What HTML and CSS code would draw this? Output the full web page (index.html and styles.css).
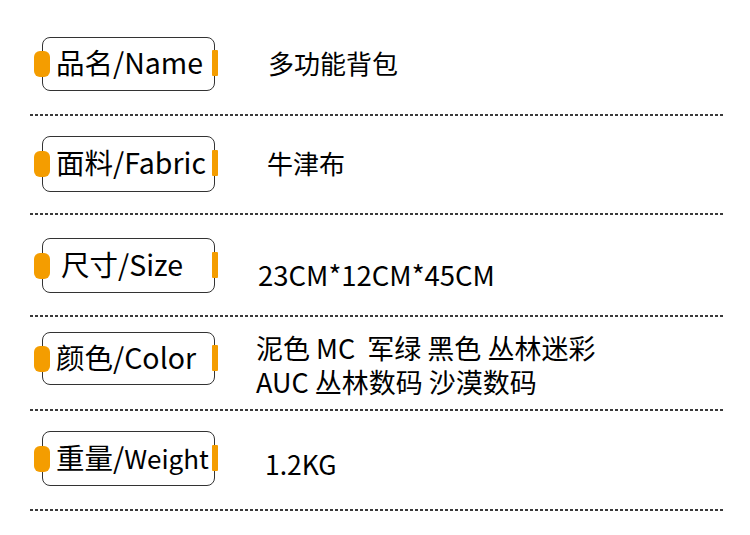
FILE: index.html
```html
<!DOCTYPE html>
<html lang="zh">
<head>
<meta charset="utf-8">
<link rel="stylesheet" href="styles.css">
</head>
<body>
<main class="sheet">
  <section class="row r1">
    <div class="tag"><span class="pill"></span><span class="tag-text">品名/Name</span><span class="bar"></span></div>
    <div class="value v1">多功能背包</div>
  </section>
  <div class="rule"></div>
  <section class="row r2">
    <div class="tag"><span class="pill"></span><span class="tag-text">面料/Fabric</span><span class="bar"></span></div>
    <div class="value v2">牛津布</div>
  </section>
  <div class="rule"></div>
  <section class="row r3">
    <div class="tag"><span class="pill"></span><span class="tag-text t3">尺寸/Size</span><span class="bar"></span></div>
    <div class="value v3">23CM*12CM*45CM</div>
  </section>
  <div class="rule"></div>
  <section class="row r4">
    <div class="tag"><span class="pill"></span><span class="tag-text">颜色/Color</span><span class="bar"></span></div>
    <div class="value v4"><div class="line">泥色 MC&nbsp; 军绿 黑色 丛林迷彩</div><div class="line">AUC 丛林数码 沙漠数码</div></div>
  </section>
  <div class="rule"></div>
  <section class="row r5">
    <div class="tag"><span class="pill"></span><span class="tag-text">重量/<span class="small">Weight</span></span><span class="bar"></span></div>
    <div class="value v5">1.2KG</div>
  </section>
  <div class="rule"></div>
</main>
</body>
</html>
```
FILE: styles.css
```css
html, body {
  margin: 0;
  padding: 0;
  background: #ffffff;
}
body {
  width: 750px;
  height: 535px;
  overflow: hidden;
  font-family: "Noto Sans CJK SC", "Noto Sans", sans-serif;
  color: #000;
}
.sheet {
  padding-left: 30px;
  width: 693px;
}
.row {
  display: flex;
  align-items: center;
  padding-left: 12px;
}
.r1 { padding-top: 37px; padding-bottom: 23px; }
.r2 { padding-top: 20px; padding-bottom: 21px; }
.r3 { padding-top: 23px; padding-bottom: 22px; }
.r4 { padding-top: 15px; padding-bottom: 24px; }
.r5 { padding-top: 20px; padding-bottom: 23px; }

.tag {
  position: relative;
  box-sizing: border-box;
  width: 173px;
  height: 55px;
  border: 1.5px solid #333;
  border-radius: 8px;
  display: flex;
  align-items: center;
  padding-left: 13px;
}
.r1 .tag { height: 54px; }
.r2 .tag { height: 56px; }
.r4 .tag { height: 53px; }
.tag-text {
  font-size: 28.5px;
  line-height: 1;
  white-space: nowrap;
  margin-top: -3px;
}
.t3 { padding-left: 5px; }
.small { font-size: 26px; }
.pill {
  position: absolute;
  left: -9px;
  top: 50%;
  width: 16px;
  height: 26px;
  margin-top: -13px;
  background: #f49d00;
  border-radius: 6px;
}
.bar {
  position: absolute;
  right: -4px;
  top: 50%;
  width: 6px;
  height: 26px;
  margin-top: -14px;
  background: #f49d00;
  border-radius: 1px;
}
.value {
  font-size: 26px;
  line-height: 34px;
  font-weight: 400;
  white-space: nowrap;
}
.v1 { margin-left: 53px; margin-top: -2px; }
.v2 { margin-left: 52px; margin-top: -2px; }
.v3 { margin-left: 43px; margin-top: 16px; font-size: 27.5px; }
.v4 { margin-left: 41px; margin-top: -2px; margin-bottom: -15px; font-size: 27px; }
.v5 { margin-left: 50px; margin-top: 10px; font-size: 26.5px; }
.line { line-height: 34px; }
.rule {
  height: 2px;
  background: repeating-linear-gradient(to right, #3a3a3a 0 3px, transparent 3px 5px);
}
```
